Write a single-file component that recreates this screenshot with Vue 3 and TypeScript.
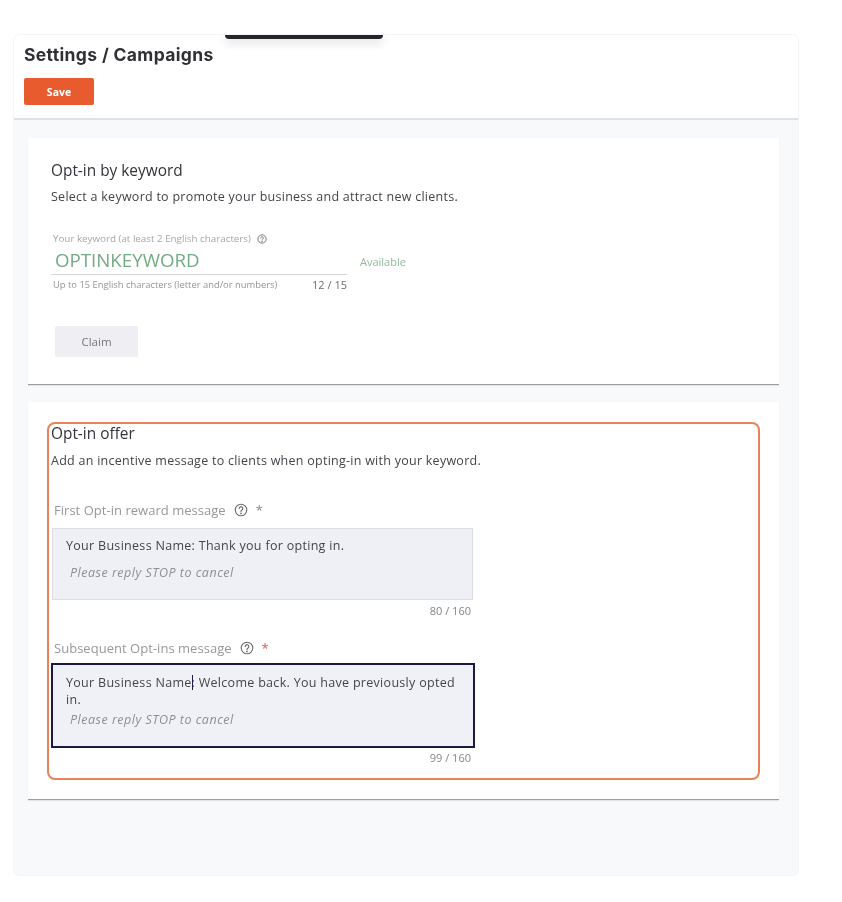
<script setup lang="ts">
const keyword = 'OPTINKEYWORD'
const keywordMax = 15
const messages = [
  { label: 'First Opt-in reward message', body: 'Your Business Name: Thank you for opting in.', count: 80, focused: false },
  { label: 'Subsequent Opt-ins message', body: 'Your Business Name: Welcome back. You have previously opted in.', count: 99, focused: true },
]
</script>

<template>
  <main class="page">
    <section class="shell">
      <div class="notch"></div>
      <header class="head">
        <h1>Settings / Campaigns</h1>
        <button class="save">Save</button>
      </header>
      <div class="content">
        <article class="card first">
          <h2>Opt-in by keyword</h2>
          <p class="desc">Select a keyword to promote your business and attract new clients.</p>
          <div class="kw-label">
            <span>Your keyword (at least 2 English characters)</span>
            <svg width="10" height="10" viewBox="0 0 16 16" fill="none" stroke="#77787d" stroke-width="1.6">
              <circle cx="8" cy="8" r="6.6" />
              <path d="M5.9 6.4a2.1 2.1 0 1 1 3.2 1.8c-.7.4-1.1.8-1.1 1.5" stroke-linecap="round" />
              <circle cx="8" cy="11.8" r=".5" />
            </svg>
          </div>
          <div class="kw-row">
            <div class="kw-field">
              <div class="kw-value">{{ keyword }}</div>
              <div class="kw-foot">
                <span>Up to 15 English characters (letter and/or numbers)</span>
                <b>{{ keyword.length }} / {{ keywordMax }}</b>
              </div>
            </div>
            <span class="avail">Available</span>
          </div>
          <button class="claim">Claim</button>
        </article>

        <article class="card second">
          <div class="highlight">
            <h2>Opt-in offer</h2>
            <p class="desc">Add an incentive message to clients when opting-in with your keyword.</p>
            <div v-for="m in messages" :key="m.label" class="msg" :class="{ focused: m.focused }">
              <div class="msg-label">
                <span>{{ m.label }}</span>
                <svg width="14" height="14" viewBox="0 0 16 16" fill="none" stroke="#6d6e72" stroke-width="1.3">
                  <circle cx="8" cy="8" r="6.6" />
                  <path d="M5.9 6.3a2.1 2.1 0 1 1 3.2 1.8c-.7.4-1.1.8-1.1 1.6" stroke-linecap="round" />
                  <circle cx="8" cy="11.9" r=".4" />
                </svg>
                <i class="star">*</i>
              </div>
              <div class="box">
                <div class="body">
                  {{ m.body }}
                  <span v-if="m.focused" class="caret"></span>
                </div>
                <div class="stop">Please reply STOP to cancel</div>
              </div>
              <div class="count">{{ m.count }} / 160</div>
            </div>
          </div>
        </article>
      </div>
    </section>
  </main>
</template>

<style>
html, body { background: #fff; }
</style>

<style scoped>
.page {
  width: 842px;
  height: 902px;
  padding: 35px 0 0 14px;
  box-sizing: border-box;
  font-family: "Open Sans", sans-serif;
  color: #3c3d42;
  filter: blur(0.35px);
}
.shell {
  position: relative;
  width: 784px;
  height: 840px;
  background: #f8f9fb;
  border-radius: 6px;
  box-shadow: 0 0 0 1px #f3f4f6;
  overflow: hidden;
}
.notch {
  position: absolute;
  left: 211px;
  top: 0;
  width: 158px;
  height: 4px;
  background: #25252c;
  border-radius: 0 0 6px 6px;
  box-shadow: 0 3px 10px rgba(30, 30, 40, 0.22);
}
.head {
  height: 85px;
  box-sizing: border-box;
  padding: 9px 10px 0;
  background: #fff;
  border-bottom: 2px solid #e0e1e5;
}
h1 {
  margin: 0;
  font-family: Inter, sans-serif;
  font-size: 17.5px;
  font-weight: 700;
  line-height: 22px;
  letter-spacing: 0.35px;
  color: #2f3036;
}
.save {
  display: block;
  width: 70px;
  height: 27px;
  margin-top: 12px;
  padding: 0;
  border: 0;
  border-radius: 2px;
  background: #e85b2f;
  color: #fff;
  font: 700 10.5px "Open Sans", sans-serif;
}
.content {
  padding: 18px 19px 0 14px;
}
.card {
  width: 751px;
  box-sizing: border-box;
  background: #fff;
  border-bottom: 1px solid #9c9da1;
  box-shadow: 0 1px 1px rgba(0, 0, 0, 0.08);
}
.first {
  height: 247px;
  padding: 24px 23px 0;
}
.second {
  height: 398px;
  margin-top: 17px;
  padding: 20px 19px 0;
}
h2 {
  margin: 0;
  font-size: 15.4px;
  font-weight: 400;
  line-height: 18px;
  color: #33343a;
}
.desc {
  margin: 8px 0 0;
  font-size: 12.5px;
  line-height: 18px;
  letter-spacing: 0.26px;
  color: #44454a;
}
.kw-label {
  display: flex;
  align-items: center;
  gap: 6px;
  margin: 26px 0 0 2px;
  font-size: 9.8px;
  line-height: 14px;
  color: #a5a6aa;
}
.kw-row {
  display: flex;
  gap: 13px;
}
.kw-field {
  width: 296px;
}
.kw-value {
  height: 29px;
  padding-left: 4px;
  box-sizing: border-box;
  border-bottom: 1px solid #d4d5d8;
  font-size: 18.7px;
  line-height: 27px;
  color: #73ab82;
}
.kw-foot {
  display: flex;
  justify-content: space-between;
  padding: 4px 0 0 2px;
  font-size: 9.4px;
  line-height: 12px;
  color: #94959a;
}
.kw-foot b {
  font-size: 11px;
  font-weight: 400;
  color: #6d6e72;
}
.avail {
  margin-top: 8px;
  font-size: 11px;
  line-height: 15px;
  color: #92ba9b;
}
.claim {
  display: block;
  width: 83px;
  height: 31px;
  margin: 35px 0 0 4px;
  padding: 0;
  border: 0;
  border-radius: 2px;
  background: #eeeef3;
  color: #76777b;
  font: 400 11.5px "Open Sans", sans-serif;
}
.highlight {
  height: 358px;
  box-sizing: border-box;
  padding: 1px 2px 0 2px;
  border: 2px solid #e9815b;
  border-radius: 8px;
}
.highlight .desc {
  margin-top: 9px;
}
.msg {
  width: 421px;
  margin: 31px 0 0 1px;
}
.msg + .msg {
  margin-top: 21px;
}
.msg-label {
  display: flex;
  align-items: center;
  gap: 8px;
  padding-left: 2px;
  height: 18px;
  font-size: 13px;
  letter-spacing: 0.03px;
  color: #97989c;
}
.star {
  font-style: normal;
  color: #85868a;
}
.focused .star {
  color: #e0573a;
}
.box {
  height: 72px;
  margin-top: 9px;
  box-sizing: border-box;
  padding: 8px 12px 0 13px;
  background: #eff0f6;
  border: 1px solid #dcdde2;
}
.body {
  position: relative;
  font-size: 12.5px;
  line-height: 17px;
  letter-spacing: 0.3px;
  color: #44454a;
}
.caret {
  position: absolute;
  left: 126px;
  top: 1px;
  width: 1px;
  height: 15px;
  background: #1b1c4a;
}
.stop {
  margin: 11px 0 0 4px;
  font-size: 12.5px;
  font-style: italic;
  line-height: 16px;
  letter-spacing: 0.5px;
  color: #8e8f94;
}
.focused .box {
  width: 424px;
  height: 85px;
  margin: 6px 0 0 -1px;
  padding: 9px 12px 0 13px;
  background: #f0f1f7;
  border: 2px solid #1a1a44;
}
.focused .stop {
  margin-top: 4px;
}
.count {
  margin-top: 4px;
  padding-right: 2px;
  text-align: right;
  font-size: 11px;
  line-height: 14px;
  color: #85868a;
}
.focused .count {
  margin-top: 3px;
}
</style>
